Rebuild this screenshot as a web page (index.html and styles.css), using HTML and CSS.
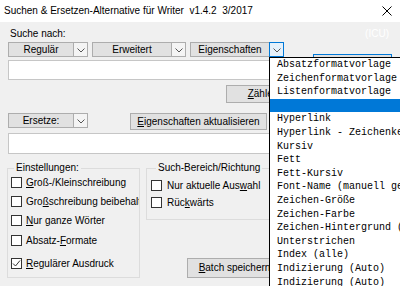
FILE: index.html
```html
<!DOCTYPE html>
<html>
<head>
<meta charset="utf-8">
<link rel="stylesheet" href="styles.css">
</head>
<body>
<div class="window">
  <div class="titlebar">
    <span class="title">Suchen &amp; Ersetzen-Alternative für Writer  v1.4.2  3/2017</span>
    <svg class="close" width="10" height="10" viewBox="0 0 10 10"><path d="M0.5 0.5 L9.5 9.5 M9.5 0.5 L0.5 9.5" stroke="#000" stroke-width="1" fill="none"/></svg>
  </div>
  <div class="client">
    <div class="main">
      <div class="left">
        <div class="label">Suche nach:</div>
        <div class="combos">
          <div class="combo">
            <div class="face w66">Regulär</div>
            <div class="arrow"><svg width="8" height="5" viewBox="0 0 8 5"><path d="M0.5 0.5 L4 4 L7.5 0.5" stroke="#555" fill="none"/></svg></div>
          </div>
          <div class="combo">
            <div class="face w80">Erweitert</div>
            <div class="arrow"><svg width="8" height="5" viewBox="0 0 8 5"><path d="M0.5 0.5 L4 4 L7.5 0.5" stroke="#555" fill="none"/></svg></div>
          </div>
          <div class="combo">
            <div class="face w80">Eigenschaften</div>
            <div class="arrow open"><svg width="8" height="5" viewBox="0 0 8 5"><path d="M0.5 0.5 L4 4 L7.5 0.5" stroke="#555" fill="none"/></svg></div>
          </div>
        </div>
        <div class="input i1"></div>
        <div class="count-row"><div class="btn count"><span><u>Z</u>ählen</span></div></div>
        <div class="replace-row">
          <div class="combo">
            <div class="face w66">Ersetze:</div>
            <div class="arrow"><svg width="8" height="5" viewBox="0 0 8 5"><path d="M0.5 0.5 L4 4 L7.5 0.5" stroke="#555" fill="none"/></svg></div>
          </div>
          <div class="btn update"><span><u>E</u>igenschaften aktualisieren</span></div>
        </div>
        <div class="input i2"></div>
        <div class="groups">
          <fieldset class="g1">
            <legend>Einstellungen:</legend>
            <div class="checks">
              <div class="chk"><span class="box"></span><span><u>G</u>roß-/Kleinschreibung</span></div>
              <div class="chk"><span class="box"></span><span>Gro<u>ß</u>schreibung beibehalten</span></div>
              <div class="chk"><span class="box"></span><span><u>N</u>ur ganze Wörter</span></div>
              <div class="chk r4"><span class="box"></span><span>Absatz-<u>F</u>ormate</span></div>
              <div class="chk r5"><span class="box"><svg width="9" height="9" viewBox="0 0 9 9"><path d="M1 4.5 L3.5 7 L8 1.5" stroke="#333" stroke-width="1" fill="none"/></svg></span><span><u>R</u>egulärer Ausdruck</span></div>
            </div>
          </fieldset>
          <div class="gcol">
            <fieldset class="g2">
              <legend>Such-Bereich/Richtung</legend>
              <div class="checks checks2">
                <div class="chk"><span class="box"></span><span>Nur aktuelle Aus<u>w</u>ahl</span></div>
                <div class="chk"><span class="box"></span><span>Rüc<u>k</u>wärts</span></div>
              </div>
            </fieldset>
            <div class="btn batch"><span><u>B</u>atch speichern</span></div>
          </div>
        </div>
      </div>
      <div class="right">
        <div class="icu">(ICU)</div>
        <div class="btn default"></div>
      </div>
    </div>
    <div class="dropdown">
      <div class="item">Absatzformatvorlage</div>
      <div class="item">Zeichenformatvorlage</div>
      <div class="item">Listenformatvorlage</div>
      <div class="item sel"></div>
      <div class="item">Hyperlink</div>
      <div class="item">Hyperlink - Zeichenkette</div>
      <div class="item">Kursiv</div>
      <div class="item">Fett</div>
      <div class="item">Fett-Kursiv</div>
      <div class="item">Font-Name (manuell gesetzt)</div>
      <div class="item">Zeichen-Größe</div>
      <div class="item">Zeichen-Farbe</div>
      <div class="item">Zeichen-Hintergrund (Farbe)</div>
      <div class="item">Unterstrichen</div>
      <div class="item">Index (alle)</div>
      <div class="item">Indizierung (Auto)</div>
      <div class="item">Indizierung (Auto)</div>
    </div>
  </div>
</div>
</body>
</html>
```
FILE: styles.css
```css
* { box-sizing: border-box; }
html, body { margin: 0; padding: 0; }
body {
  width: 400px;
  height: 286px;
  overflow: hidden;
  background: #f0f0f0;
  font-family: "Liberation Sans", Arial, sans-serif;
  font-size: 10px;
  color: #000;
}
.window { width: 400px; height: 286px; overflow: hidden; background: #f0f0f0; }
.titlebar {
  height: 22px;
  background: #fff;
  display: flex;
  align-items: center;
  justify-content: space-between;
  padding: 0 8px 0 4px;
}
.title { line-height: 12px; white-space: pre; }
.close { display: block; }
.client { position: relative; height: 264px; padding-left: 8px; }
.main { display: flex; }
.left { width: 292px; flex: none; display: flex; flex-direction: column; }
.label { margin-top: 6px; height: 12px; line-height: 12px; padding-left: 2px; }
.combos { margin-top: 2px; display: flex; height: 15px; }
.combo { display: flex; height: 15px; flex: none; }
.combo + .combo { margin-left: 4px; }
.face {
  height: 15px;
  border: 1px solid #adadad;
  background: #e1e1e1;
  display: flex;
  align-items: center;
  justify-content: center;
  line-height: 12px;
  white-space: nowrap;
}
.w66 { width: 66px; }
.w80 { width: 80px; }
.arrow {
  width: 15px;
  height: 15px;
  margin-left: -1px;
  border: 1px solid #adadad;
  background: #f4f4f4;
  display: flex;
  align-items: center;
  justify-content: center;
  padding-top: 1px;
}
.arrow svg { display: block; }
.arrow.open { border-color: #0078d7; background: #e5f1fb; }
.input { background: #fff; border: 1px solid #c6c6c6; }
.i1 { margin-top: 3px; height: 20px; }
.i2 { margin-top: 3px; height: 21px; }
.btn {
  border: 1px solid #adadad;
  background: #e1e1e1;
  display: flex;
  align-items: center;
  justify-content: center;
  line-height: 12px;
  white-space: nowrap;
}
.count-row { margin-top: 5px; display: flex; justify-content: flex-end; }
.count { width: 74px; height: 18px; }
.replace-row { margin-top: 10px; display: flex; align-items: flex-start; height: 17px; }
.update { margin-left: 42px; width: 137px; height: 17px; }
.groups { margin-top: 8px; margin-left: -1px; display: flex; height: 116px; }
fieldset {
  margin: 0;
  border: 1px solid #dcdcdc;
  min-width: 0;
  overflow: hidden;
}
legend { padding: 0 2px; line-height: 12px; height: 12px; }
.g1 { width: 133px; height: 116px; padding: 0 0 0 3px; flex: none; }
.g1 legend { margin-left: 3px; }
.gcol { margin-left: 6px; flex: 1; display: flex; flex-direction: column; }
.g2 { height: 58px; padding: 0 0 0 4px; }
.g2 legend { margin-left: 5px; }
.batch { margin-top: auto; margin-left: 41px; width: 95px; height: 20px; }
.checks { display: flex; flex-direction: column; gap: 5px; padding-top: 1px; }
.checks2 { gap: 3px; padding-top: 4px; }
.chk { display: flex; align-items: center; height: 14px; gap: 4px; white-space: nowrap; }
.checks2 .chk { gap: 5px; }
.r4 { margin-top: 1px; }
.r5 { margin-top: 4px; }
.box {
  width: 11px;
  height: 11px;
  border: 1px solid #333;
  background: #fff;
  flex: none;
  display: flex;
  align-items: center;
  justify-content: center;
}
.box svg { display: block; }
.right { margin-left: 13px; width: 79px; flex: none; display: flex; flex-direction: column; }
.icu { margin-top: 6px; height: 12px; line-height: 12px; text-align: right; padding-right: 3px; color: #fff; }
.default { margin-top: 14px; height: 23px; border-color: #0078d7; }
.dropdown {
  position: absolute;
  left: 269px;
  top: 35px;
  width: 140px;
  height: 240px;
  background: #fff;
  border: 1px solid #000;
  font-family: "Liberation Mono", "Courier New", monospace;
  font-size: 10px;
  color: #000;
  overflow: hidden;
}
.item { height: 13.6px; line-height: 13.6px; padding-left: 7px; white-space: nowrap; }
.item.sel { background: #0078d7; }
```
